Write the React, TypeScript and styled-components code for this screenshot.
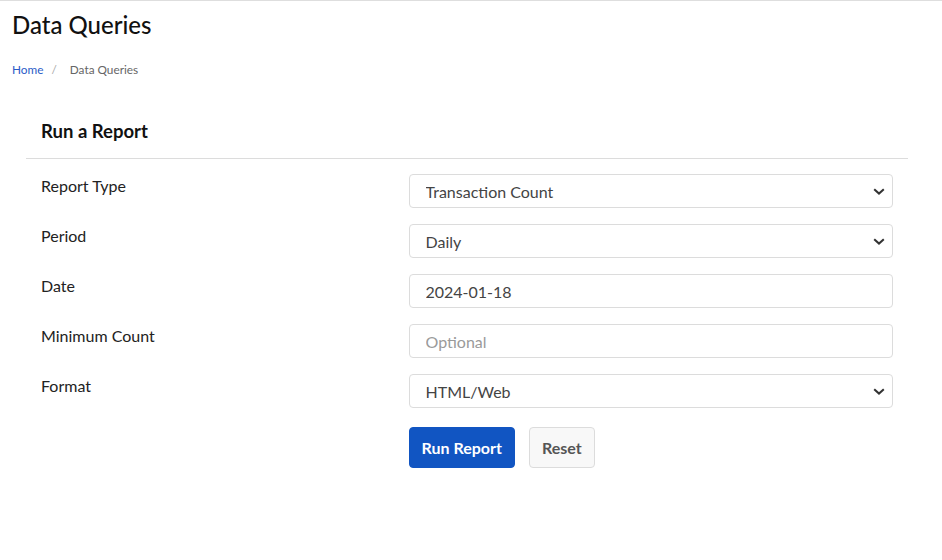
import { useState } from 'react';
import styled, { createGlobalStyle } from 'styled-components';

const FONT = 'Lato, "Open Sans", Arial, sans-serif';

const GlobalStyle = createGlobalStyle`
  html, body {
    margin: 0;
    padding: 0;
    background: #ffffff;
  }
  body {
    font-family: ${FONT};
    color: #222;
    border-top: 1px solid #dedede;
  }
  * {
    box-sizing: border-box;
  }
`;

const Page = styled.div`
  padding: 0 12px;
`;

const Title = styled.h1`
  margin: 0;
  padding-top: 10px;
  font-size: 24px;
  line-height: 28px;
  font-weight: 500;
  color: #111;
`;

const Breadcrumb = styled.nav`
  display: flex;
  align-items: center;
  margin-top: 24px;
  font-size: 11.8px;
  line-height: 14px;
  color: #666;

  & a {
    color: #2a5bc7;
    text-decoration: none;
  }

  & span.divider {
    color: #aaa;
    padding: 0 13px 0 8px;
  }
`;

const Card = styled.section`
  margin: 44px 22px 0 14px;
`;

const CardHeader = styled.h2`
  margin: 0;
  padding: 0 15px 17px;
  font-size: 18.5px;
  line-height: 20px;
  font-weight: 700;
  color: #111;
  border-bottom: 1px solid #dcdcdc;
`;

const Form = styled.form`
  padding-top: 15px;
`;

const Row = styled.div`
  display: grid;
  grid-template-columns: 41.6667% 58.3333%;
  margin-bottom: 16px;

  & > * {
    padding: 0 15px;
  }
`;

const Label = styled.label`
  padding-top: 2px;
  font-size: 16px;
  line-height: 20px;
  color: #222;
`;

const Field = styled.div`
  position: relative;
`;

const controlStyles = `
  display: block;
  width: 100%;
  height: 34px;
  padding: 0 16px;
  font-family: ${FONT};
  font-size: 16px;
  color: #444;
  background: #ffffff;
  border: 1px solid #dcdcdc;
  border-radius: 4px;
  outline: none;
`;

const Select = styled.select`
  ${controlStyles}
  appearance: none;
  padding-right: 36px;
`;

const Input = styled.input`
  ${controlStyles}

  &::placeholder {
    color: #9a9a9a;
  }
`;

const Chevron = styled.svg`
  position: absolute;
  right: 23px;
  top: 14px;
  pointer-events: none;
`;

const Actions = styled.div`
  display: flex;
  gap: 14px;
  padding-top: 3px;
`;

const Button = styled.button<{ $primary?: boolean }>`
  height: 41px;
  padding: 0 12px;
  font-family: ${FONT};
  font-size: 16px;
  font-weight: 700;
  border-radius: 4px;
  cursor: pointer;
  color: ${(p) => (p.$primary ? '#ffffff' : '#555555')};
  background: ${(p) => (p.$primary ? '#1155c2' : '#f8f8f8')};
  border: 1px solid ${(p) => (p.$primary ? '#1155c2' : '#dcdcdc')};
`;

function SelectField({ value, options }: { value: string; options: string[] }) {
  const [current, setCurrent] = useState(value);
  return (
    <Field>
      <Select value={current} onChange={(e) => setCurrent(e.target.value)}>
        {options.map((o) => (
          <option key={o}>{o}</option>
        ))}
      </Select>
      <Chevron width="12" height="7" viewBox="0 0 12 7">
        <path d="M1.2 1.2 L6 5.6 L10.8 1.2" fill="none" stroke="#333" strokeWidth="2" />
      </Chevron>
    </Field>
  );
}

export default function App() {
  return (
    <Page>
      <GlobalStyle />
      <Title>Data Queries</Title>
      <Breadcrumb>
        <a href="#">Home</a>
        <span className="divider">/</span>
        <span>Data Queries</span>
      </Breadcrumb>

      <Card>
        <CardHeader>Run a Report</CardHeader>
        <Form onSubmit={(e) => e.preventDefault()}>
          <Row>
            <Label>Report Type</Label>
            <SelectField value="Transaction Count" options={['Transaction Count', 'Transaction Volume']} />
          </Row>
          <Row>
            <Label>Period</Label>
            <SelectField value="Daily" options={['Daily', 'Weekly', 'Monthly']} />
          </Row>
          <Row>
            <Label>Date</Label>
            <Field>
              <Input defaultValue="2024-01-18" />
            </Field>
          </Row>
          <Row>
            <Label>Minimum Count</Label>
            <Field>
              <Input placeholder="Optional" />
            </Field>
          </Row>
          <Row>
            <Label>Format</Label>
            <SelectField value="HTML/Web" options={['HTML/Web', 'CSV', 'PDF']} />
          </Row>
          <Row>
            <div />
            <Actions>
              <Button type="submit" $primary>
                Run Report
              </Button>
              <Button type="reset">Reset</Button>
            </Actions>
          </Row>
        </Form>
      </Card>
    </Page>
  );
}
